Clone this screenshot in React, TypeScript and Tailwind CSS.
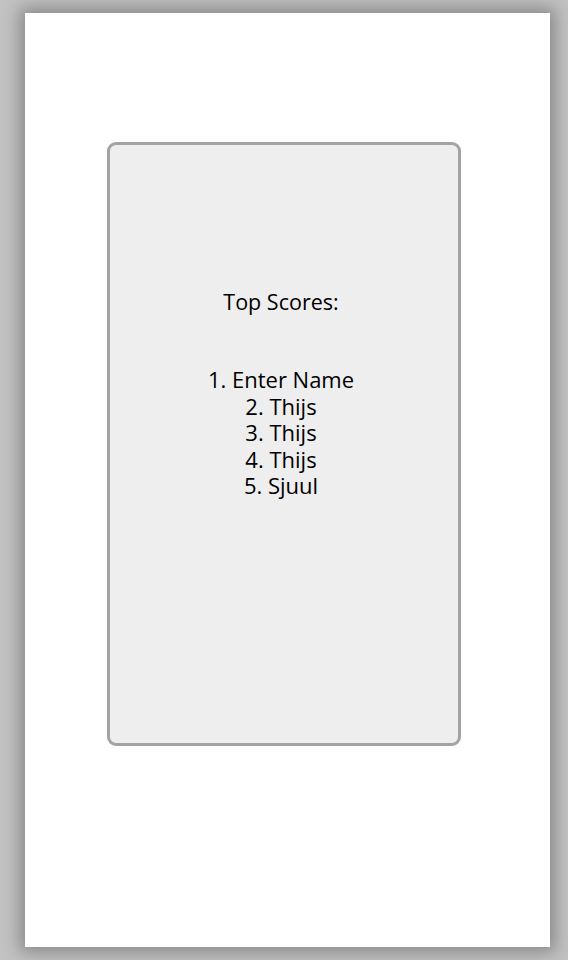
export default function App() {
  return (
    <div className="h-[960px] w-[568px] bg-[#c2c2c2] pt-[13px] pb-[13px] pl-[25px] pr-[18px] flex" style={{ fontFamily: '"Open Sans", "Noto Sans", sans-serif' }}>
      <div className="flex-1 bg-white shadow-[0_0_16px_5px_rgba(0,0,0,0.3)] pt-[129px] pl-[82px]">
        <div className="w-[354px] h-[604px] bg-[#eeeeee] border-[3px] border-[#a3a3a3] rounded-[9px] flex flex-col items-center text-black pt-[144px] pr-[6px]">
          <div className="text-[21.5px] leading-[26px]">Top Scores:</div>
          <div className="mt-[51px] flex flex-col items-center text-[22px] leading-[26.5px]">
            <div>1. Enter Name</div>
            <div>2. Thijs</div>
            <div>3. Thijs</div>
            <div>4. Thijs</div>
            <div>5. Sjuul</div>
          </div>
        </div>
      </div>
    </div>
  );
}
